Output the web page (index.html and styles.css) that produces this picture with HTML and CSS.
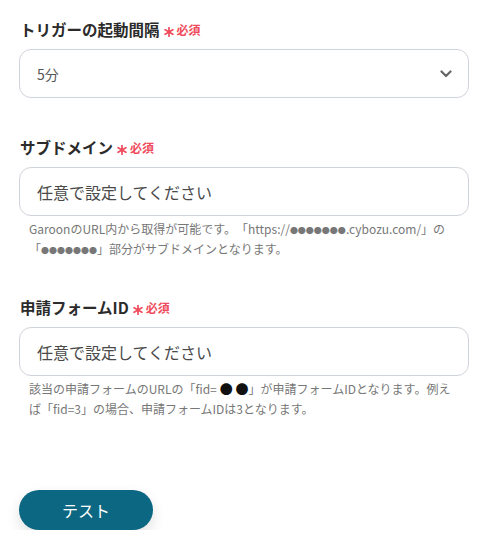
FILE: index.html
```html
<!DOCTYPE html>
<html lang="ja">
<head>
    <meta charset="UTF-8">
    <meta name="viewport" content="width=device-width, initial-scale=1.0">
    <title>トリガー設定</title>
    <link rel="stylesheet" href="styles.css">
</head>
<body>
    <div class="form">
        <div class="field">
            <label class="field-label">トリガーの起動間隔<span class="req"><svg class="star" width="10" height="10" viewBox="0 0 10 10"><path d="M5 0.5 V9.5 M1.1 2.75 L8.9 7.25 M1.1 7.25 L8.9 2.75" stroke="#ef4b5c" stroke-width="1.7" stroke-linecap="round"/></svg>必須</span></label>
            <div class="select-box">
                <span class="select-value">5分</span>
                <svg class="chevron" width="12" height="8" viewBox="0 0 12 8">
                    <path d="M1.5 1.5 L6 6 L10.5 1.5" fill="none" stroke="#666" stroke-width="2.2" stroke-linecap="round" stroke-linejoin="round"/>
                </svg>
            </div>
        </div>

        <div class="field">
            <label class="field-label">サブドメイン<span class="req"><svg class="star" width="10" height="10" viewBox="0 0 10 10"><path d="M5 0.5 V9.5 M1.1 2.75 L8.9 7.25 M1.1 7.25 L8.9 2.75" stroke="#ef4b5c" stroke-width="1.7" stroke-linecap="round"/></svg>必須</span></label>
            <input class="text-input" type="text" placeholder="任意で設定してください">
            <p class="help">GaroonのURL内から取得が可能です。「https://<span class="mini">●●●●●●●</span>.cybozu.com/」の「<span class="mini">●●●●●●●</span>」部分がサブドメインとなります。</p>
        </div>

        <div class="field">
            <label class="field-label">申請フォームID<span class="req"><svg class="star" width="10" height="10" viewBox="0 0 10 10"><path d="M5 0.5 V9.5 M1.1 2.75 L8.9 7.25 M1.1 7.25 L8.9 2.75" stroke="#ef4b5c" stroke-width="1.7" stroke-linecap="round"/></svg>必須</span></label>
            <input class="text-input" type="text" placeholder="任意で設定してください">
            <p class="help">該当の申請フォームのURLの「fid=<span class="dots"> ● ●</span>」が申請フォームIDとなります。例えば「fid=3」の場合、申請フォームIDは3となります。</p>
        </div>
    </div>

    <button class="test-btn">テスト</button>
</body>
</html>
```

FILE: styles.css
```css
body {
    margin: 0;
    padding: 18px 17px 0 19px;
    font-family: "Noto Sans CJK JP", "Noto Sans", sans-serif;
    color: #333;
    background: #fff;
    text-spacing-trim: space-all;
}
.field {
    margin-bottom: 38px;
}
.field-label {
    display: flex;
    align-items: center;
    height: 22px;
    padding-left: 1px;
    margin-bottom: 9px;
    font-size: 15.5px;
    font-weight: bold;
    color: #2b2b2b;
}
.req {
    display: inline-flex;
    align-items: center;
    margin-left: 4px;
    font-size: 12px;
    font-weight: bold;
    color: #ef4b5c;
}
.star {
    margin-right: 3px;
    position: relative;
    top: 3px;
}
.select-box {
    display: flex;
    align-items: center;
    justify-content: space-between;
    box-sizing: border-box;
    height: 49px;
    padding: 0 16px 0 17px;
    border: 1px solid #cfd3da;
    border-radius: 12px;
}
.select-value {
    font-size: 14px;
    color: #555;
}
.text-input {
    display: block;
    box-sizing: border-box;
    width: 100%;
    height: 49px;
    padding: 0 17px;
    border: 1px solid #cfd3da;
    border-radius: 12px;
    font-family: inherit;
    font-size: 16px;
    outline: none;
}
.text-input::placeholder {
    color: #4a4a4a;
}
.help {
    margin: 3px 0 0;
    padding: 0 8px 0 10px;
    font-size: 12px;
    line-height: 19.5px;
    color: #777;
}
.mini {
    font-size: 8px;
    line-height: 0;
}
.dots {
    color: #111;
    font-size: 13px;
    line-height: 0;
    white-space: pre;
}
.field:last-child {
    margin-bottom: 0;
}
.test-btn {
    display: block;
    margin-top: 72px;
    width: 134px;
    height: 40px;
    border: none;
    border-radius: 20px;
    background-color: #0c6882;
    color: #fff;
    font-family: inherit;
    font-size: 16px;
    box-shadow: 0 6px 14px rgba(0, 0, 0, 0.12);
    cursor: pointer;
}
```
